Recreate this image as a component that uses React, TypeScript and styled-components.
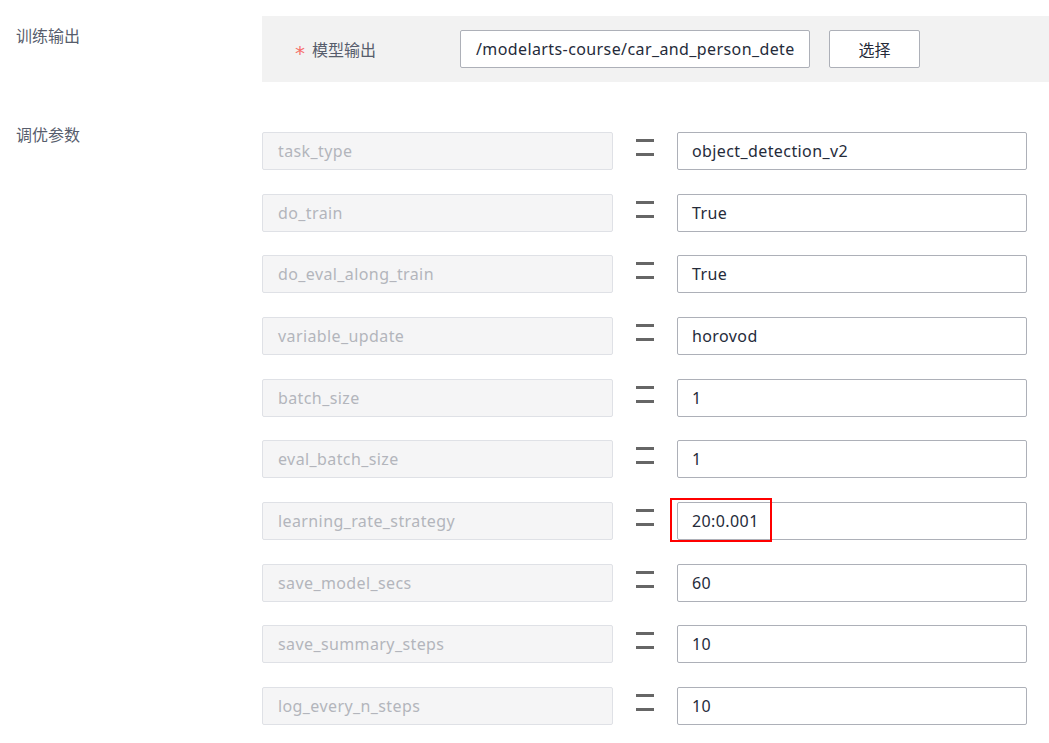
import React from "react";
import styled, { createGlobalStyle } from "styled-components";

const Global = createGlobalStyle`
  html, body { margin: 0; padding: 0; background: #ffffff; }
  body {
    font-family: "Noto Sans", "Noto Sans CJK SC", sans-serif;
    font-size: 16px;
    color: #252b3a;
  }
  * { box-sizing: border-box; }
`;

const Page = styled.div`
  width: 1049px;
  height: 743px;
  overflow: hidden;
  padding-top: 16px;
  display: flex;
  flex-direction: column;
  gap: 40px;
`;

const Section = styled.div`
  display: grid;
  grid-template-columns: 262px 1fr;
  align-items: start;
`;

const SectionLabel = styled.div<{ $top: number }>`
  padding-left: 16px;
  padding-top: ${(p) => p.$top}px;
  line-height: 24px;
  font-size: 16px;
  color: #575d6c;
  font-family: "Noto Sans CJK SC", sans-serif;
`;

const Panel = styled.div`
  background: #f2f2f2;
  height: 66px;
  display: flex;
  align-items: center;
  padding-left: 33px;
`;

const FieldLabel = styled.div`
  width: 165px;
  display: flex;
  align-items: center;
  gap: 7px;
  font-family: "Noto Sans CJK SC", sans-serif;
  font-size: 16px;
  color: #575d6c;
  line-height: 24px;
`;

const Required = styled.span`
  color: #f66f6a;
  font-family: "DejaVu Sans", sans-serif;
  font-size: 20px;
  line-height: 1;
  transform: translateY(4px);
`;

const PathInput = styled.div`
  width: 350px;
  height: 38px;
  background: #fff;
  border: 1px solid #adb0b8;
  border-radius: 2px;
  padding: 0 0 0 15px;
  display: flex;
  align-items: center;
  overflow: hidden;
  white-space: nowrap;
  color: #252b3a;
  font-size: 16px;
  letter-spacing: 0.4px;
`;

const SelectButton = styled.div`
  margin-left: 19px;
  width: 91px;
  height: 38px;
  background: #fff;
  border: 1px solid #adb0b8;
  border-radius: 2px;
  display: flex;
  align-items: center;
  justify-content: center;
  font-family: "Noto Sans CJK SC", sans-serif;
  font-size: 16px;
  color: #252b3a;
`;

const Rows = styled.div`
  padding-top: 10px;
  display: flex;
  flex-direction: column;
  gap: 23.67px;
`;

const Row = styled.div`
  display: flex;
  align-items: flex-start;
  height: 38px;
`;

const KeyBox = styled.div`
  width: 351px;
  height: 38px;
  background: #f5f5f6;
  border: 1px solid #dfe1e6;
  border-radius: 2px;
  padding-left: 15px;
  display: flex;
  align-items: center;
  color: #b3b5bc;
  font-size: 16px;
  letter-spacing: 0.4px;
`;

const Equals = styled.div`
  width: 64px;
  padding-top: 7px;
  display: flex;
  justify-content: center;
  &::before {
    content: "";
    display: block;
    width: 18px;
    height: 11px;
    border-top: 3px solid #666666;
    border-bottom: 3px solid #666666;
  }
`;

const ValueWrap = styled.div`
  position: relative;
`;

const ValueBox = styled.div`
  width: 350px;
  height: 38px;
  background: #fff;
  border: 1px solid #adb0b8;
  border-radius: 2px;
  padding-left: 14px;
  display: flex;
  align-items: center;
  color: #252b3a;
  font-size: 16px;
  letter-spacing: 0.4px;
`;

const Highlight = styled.div`
  position: absolute;
  left: -7px;
  top: -4px;
  width: 102px;
  height: 44px;
  border: 2px solid #ff0000;
  pointer-events: none;
`;

const params: { key: string; value: string; mark?: boolean }[] = [
  { key: "task_type", value: "object_detection_v2" },
  { key: "do_train", value: "True" },
  { key: "do_eval_along_train", value: "True" },
  { key: "variable_update", value: "horovod" },
  { key: "batch_size", value: "1" },
  { key: "eval_batch_size", value: "1" },
  { key: "learning_rate_strategy", value: "20:0.001", mark: true },
  { key: "save_model_secs", value: "60" },
  { key: "save_summary_steps", value: "10" },
  { key: "log_every_n_steps", value: "10" },
];

export default function App() {
  return (
    <>
      <Global />
      <Page>
        <Section>
          <SectionLabel $top={7}>训练输出</SectionLabel>
          <Panel>
            <FieldLabel>
              <Required>*</Required>
              <span>模型输出</span>
            </FieldLabel>
            <PathInput>/modelarts-course/car_and_person_dete</PathInput>
            <SelectButton>选择</SelectButton>
          </Panel>
        </Section>
        <Section>
          <SectionLabel $top={0}>调优参数</SectionLabel>
          <Rows>
            {params.map((p) => (
              <Row key={p.key}>
                <KeyBox>{p.key}</KeyBox>
                <Equals />
                <ValueWrap>
                  <ValueBox>{p.value}</ValueBox>
                  {p.mark && <Highlight />}
                </ValueWrap>
              </Row>
            ))}
          </Rows>
        </Section>
      </Page>
    </>
  );
}
